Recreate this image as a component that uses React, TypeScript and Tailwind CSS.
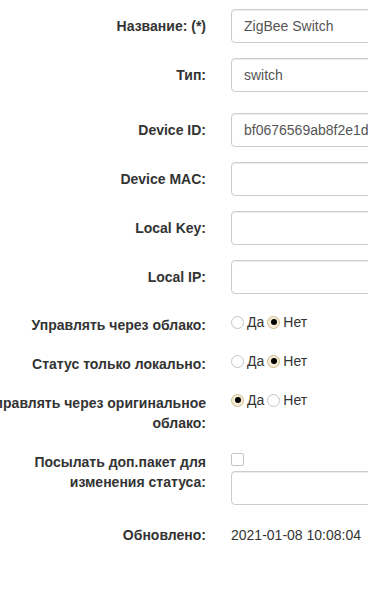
const font = { fontFamily: '"Liberation Sans", Arial, Helvetica, sans-serif' };

function Label({ lines }: { lines: string[] }) {
  return (
    <div className="flex w-[206px] shrink-0 flex-col items-end pt-[7px] text-[14px] font-bold leading-[20px] text-[#333]">
      {lines.map((l) => (
        <span key={l} className="whitespace-nowrap">
          {l}
        </span>
      ))}
    </div>
  );
}

function TextRow({ label, value = "", mb }: { label: string; value?: string; mb: string }) {
  return (
    <div className={`flex gap-[25px] ${mb}`}>
      <Label lines={[label]} />
      <div className="flex h-[34px] w-[240px] shrink-0 items-center overflow-hidden whitespace-nowrap rounded-[4px] border border-[#ccc] bg-white px-[12px] text-[14px] text-[#555] shadow-[inset_0_1px_1px_rgba(0,0,0,0.075)]">
        {value}
      </div>
    </div>
  );
}

function Radio({ checked }: { checked: boolean }) {
  return checked ? (
    <span className="flex h-[13px] w-[13px] shrink-0 items-center justify-center rounded-full border border-[#cdbb8c] bg-[#f4ecd6]">
      <span className="h-[6px] w-[6px] rounded-full bg-black" />
    </span>
  ) : (
    <span className="block h-[13px] w-[13px] shrink-0 rounded-full border border-[#c4c4c4] bg-white" />
  );
}

function RadioRow({ lines, yes }: { lines: string[]; yes: boolean }) {
  return (
    <div className="mb-[12px] flex gap-[25px]">
      <Label lines={lines} />
      <div className="mt-[4px] flex h-[20px] items-center text-[14px] leading-[20px] text-[#333]">
        <Radio checked={yes} />
        <span className="ml-[3px]">Да</span>
        <span className="ml-[3px] flex">
          <Radio checked={!yes} />
        </span>
        <span className="ml-[3px]">Нет</span>
      </div>
    </div>
  );
}

export default function App() {
  return (
    <div className="h-[602px] w-[368px] overflow-hidden bg-white pt-[9px]" style={font}>
      <TextRow label="Название: (*)" value="ZigBee Switch" mb="mb-[15px]" />
      <TextRow label="Тип:" value="switch" mb="mb-[21px]" />
      <TextRow label="Device ID:" value="bf0676569ab8f2e1d6xyzw" mb="mb-[15px]" />
      <TextRow label="Device MAC:" mb="mb-[15px]" />
      <TextRow label="Local Key:" mb="mb-[15px]" />
      <TextRow label="Local IP:" mb="mb-[14px]" />

      <RadioRow lines={["Управлять через облако:"]} yes={false} />
      <RadioRow lines={["Статус только локально:"]} yes={false} />
      <RadioRow lines={["Управлять через оригинальное", "облако:"]} yes={true} />

      <div className="mb-[13px] flex gap-[25px]">
        <Label lines={["Посылать доп.пакет для", "изменения статуса:"]} />
        <div className="flex flex-col pt-[8px]">
          <span className="block h-[13px] w-[13px] rounded-[2px] border border-[#c4c4c4] bg-white" />
          <div className="mt-[5px] h-[34px] w-[240px] rounded-[4px] border border-[#ccc] bg-white shadow-[inset_0_1px_1px_rgba(0,0,0,0.075)]" />
        </div>
      </div>

      <div className="flex gap-[25px]">
        <Label lines={["Обновлено:"]} />
        <div className="pt-[7px] text-[14px] leading-[20px] text-[#333]">2021-01-08 10:08:04</div>
      </div>
    </div>
  );
}
